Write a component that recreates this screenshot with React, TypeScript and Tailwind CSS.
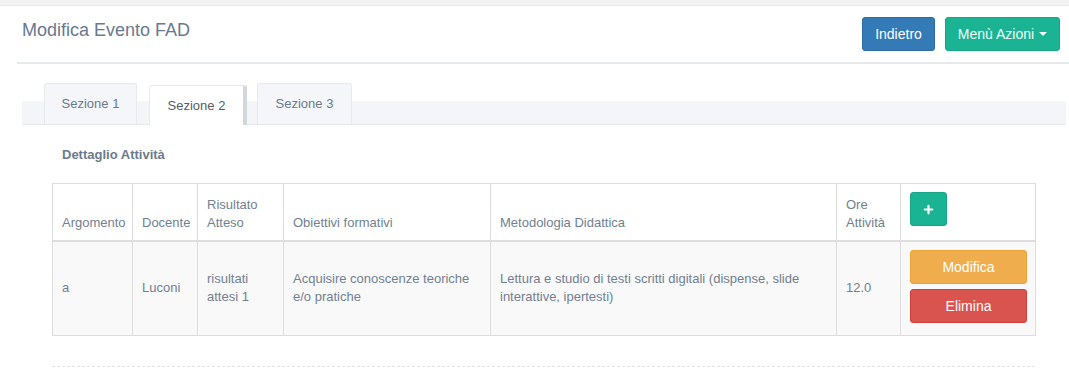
import { Plus } from 'lucide-react'

const headers = [
  { label: 'Argomento', w: 'w-[80px]' },
  { label: 'Docente', w: 'w-[65px]' },
  { label: 'Risultato Atteso', w: 'w-[86px]' },
  { label: 'Obiettivi formativi', w: 'w-[207px]' },
  { label: 'Metodologia Didattica', w: 'w-[346px]' },
  { label: 'Ore Attività', w: 'w-[64px]' },
]

const row = [
  'a',
  'Luconi',
  'risultati attesi 1',
  'Acquisire conoscenze teoriche e/o pratiche',
  'Lettura e studio di testi scritti digitali (dispense, slide interattive, ipertesti)',
  '12.0',
]

export default function App() {
  return (
    <div className="w-[1069px] h-[368px] overflow-hidden bg-white font-['Liberation_Sans',Arial,sans-serif] text-[#6b7a8d]">
      {/* Top strip */}
      <div className="h-[6px] bg-[#f3f3f4] border-b border-[#e7eaec]" />

      {/* Page header */}
      <div className="ml-[17px] h-[58px] border-b-2 border-[#e7eaec] flex items-start justify-between pt-[11px] pl-[5px] pr-[9px]">
        <h1 className="text-[18px] leading-[24px] pt-[1px] text-[#687a8f]">Modifica Evento FAD</h1>
        <div className="flex items-center gap-[10px]">
          <button className="w-[73px] h-[34px] rounded-[3px] bg-[#337ab7] border border-[#2e6da4] text-white text-[14px]">
            Indietro
          </button>
          <button className="w-[115px] h-[34px] rounded-[3px] bg-[#1ab394] border border-[#18a689] text-[#effcf8] text-[14px] flex items-center justify-center gap-[5px]">
            Menù Azioni
            <span className="w-0 h-0 border-x-[4px] border-x-transparent border-t-[4px] border-t-[#effcf8]" />
          </button>
        </div>
      </div>

      {/* Tabs */}
      <div className="mt-[20px] ml-[22px] mr-[3px] h-[41px] flex items-end pl-[22px] border-b border-[#e7eaec] bg-[linear-gradient(to_bottom,transparent_17px,#f3f5f8_17px)] text-[13px]">
        <div className="w-[93px] h-[41px] flex items-center justify-center bg-[#f4f6f9] border border-b-0 border-[#e7eaec] rounded-t-[3px]">
          Sezione 1
        </div>
        <div className="ml-[12px] w-[98px] h-[40px] -mb-px flex items-center justify-center bg-white border border-b-0 border-[#e7eaec] border-r-[4px] border-r-[#d3d7db] rounded-t-[3px] text-[#555d68]">
          Sezione 2
        </div>
        <div className="ml-[10px] w-[95px] h-[41px] flex items-center justify-center bg-[#f4f6f9] border border-b-0 border-[#e7eaec] rounded-t-[3px]">
          Sezione 3
        </div>
      </div>

      {/* Content */}
      <div className="ml-[52px] w-[983px]">
        <h2 className="mt-[21px] pl-[10px] text-[13px] leading-[18px] font-bold text-[#6b7a8d]">Dettaglio Attività</h2>

        <table className="mt-[19px] w-[983px] table-fixed border-collapse text-[13px] leading-[18px] text-[#717f91]">
          <thead>
            <tr className="h-[57px]">
              {headers.map((h) => (
                <th
                  key={h.label}
                  className={`${h.w} border border-[#dddddd] border-b-2 align-bottom text-left font-normal px-[9px] pb-[8px]`}
                >
                  {h.label}
                </th>
              ))}
              <th className="w-[135px] border border-[#dddddd] border-b-2 align-top text-left px-[9px] pt-[8px]">
                <button className="w-[37px] h-[34px] rounded-[3px] bg-[#1ab394] border border-[#18a689] flex items-center justify-center">
                  <Plus className="w-[13px] h-[13px] text-white" strokeWidth={4} />
                </button>
              </th>
            </tr>
          </thead>
          <tbody>
            <tr className="h-[95px] bg-[#f9f9f9]">
              {row.map((c, i) => (
                <td key={i} className="border border-[#dddddd] align-middle px-[9px]">
                  {c}
                </td>
              ))}
              <td className="border border-[#dddddd] align-top px-[9px] pt-[8px]">
                <div className="flex flex-col gap-[5px]">
                  <button className="w-[117px] h-[34px] rounded-[3px] bg-[#f0ad4e] border border-[#eea236] text-white text-[14px]">
                    Modifica
                  </button>
                  <button className="w-[117px] h-[34px] rounded-[3px] bg-[#d9534f] border border-[#d43f3a] text-white text-[14px]">
                    Elimina
                  </button>
                </div>
              </td>
            </tr>
          </tbody>
        </table>

        <div className="mt-[30px] border-t border-dashed border-[#e3e3e3]" />
      </div>
    </div>
  )
}
